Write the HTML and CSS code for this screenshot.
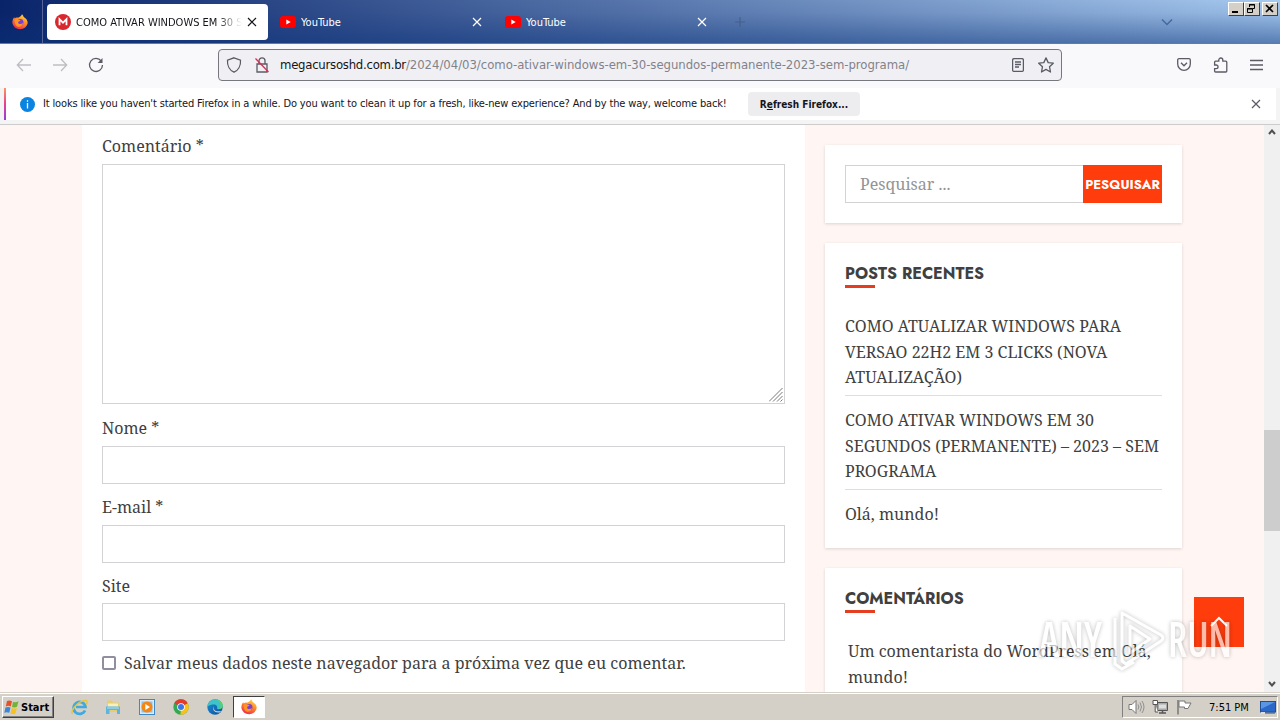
FILE: index.html
```
<!DOCTYPE html>
<html lang="pt-BR">
<head>
  <meta charset="UTF-8">
  <meta name="viewport" content="width=device-width, initial-scale=1.0">
  <title>COMO ATIVAR WINDOWS EM 30 SEGUNDOS</title>
  <link rel="stylesheet" href="styles.css">
</head>
<body>
  <!-- shared shapes -->
  <svg width="0" height="0" class="defs">
    <defs>
      <linearGradient id="fire" x1="0.8" y1="0" x2="0.3" y2="1">
        <stop offset="0" stop-color="#ffe045"/>
        <stop offset="0.45" stop-color="#ff8a2a"/>
        <stop offset="1" stop-color="#f0284f"/>
      </linearGradient>
      <linearGradient id="edge" x1="0" y1="0" x2="1" y2="1">
        <stop offset="0" stop-color="#1c8fd8"/>
        <stop offset="1" stop-color="#0c4f9c"/>
      </linearGradient>
      <symbol id="firefox" viewBox="0 0 16 16">
        <path d="M10 .3c1 1.200 1.500 2 1.700 2.700 2.500 1.300 4 3.600 4 6A7.700 7 0 0 1 .4 9C.3 6.500 1 4.600 2.200 3.200l.5 1.400C3.800 3.500 5 3.400 6 3.800 7.200 2.900 9.500 2.500 10 .3z" fill="url(#fire)"/>
        <circle cx="8.200" cy="8.200" r="3.200" fill="#7a3fd0"/>
        <path d="M2.700 6c1.500-1.300 3-1 4.200-.2l1.900.3C7.900 7.500 6.300 7.400 6 8.400c.6 1.900 3 2.200 5 .7-.3 2.600-2.500 3.900-4.600 3.700C4 12.500 2.300 9.500 2.700 6z" fill="#ff9422"/>
      </symbol>
      <symbol id="youtube" viewBox="0 0 16 12">
        <rect width="16" height="12" rx="3" fill="#f00"/>
        <path d="M6.300 3.500v5L10.700 6z" fill="#fff"/>
      </symbol>
      <symbol id="cross" viewBox="0 0 10 10">
        <path d="M1 1l8 8M9 1l-8 8" fill="none" stroke="currentColor" stroke-width="1.200"/>
      </symbol>
      <symbol id="chevron" viewBox="0 0 12 8">
        <path d="M1 1.500l5 5 5-5" fill="none" stroke="currentColor" stroke-width="1.500"/>
      </symbol>
    </defs>
  </svg>

  <div class="tabbar">
    <div class="pinned"><svg width="16" height="16"><use href="#firefox"/></svg></div>
    <div class="tab active">
      <svg width="16" height="16" viewBox="0 0 16 16"><circle cx="8" cy="8" r="8" fill="#d9272e"/><path d="M4.500 11.300V5.200L8 8.700l3.500-3.500v6.100" fill="none" stroke="#fff" stroke-width="1.800"/></svg>
      <span class="tab-title fade">COMO ATIVAR WINDOWS EM 30 SE</span>
      <svg class="close" width="10" height="10"><use href="#cross"/></svg>
    </div>
    <div class="tab">
      <svg width="16" height="12"><use href="#youtube"/></svg>
      <span class="tab-title">YouTube</span>
      <svg class="close" width="10" height="10"><use href="#cross"/></svg>
    </div>
    <div class="tab">
      <svg width="16" height="12"><use href="#youtube"/></svg>
      <span class="tab-title">YouTube</span>
      <svg class="close" width="10" height="10"><use href="#cross"/></svg>
    </div>
    <svg class="plus" width="10" height="10" viewBox="0 0 10 10"><path d="M5 0v10M0 5h10" stroke="#46608c" stroke-width="1.200"/></svg>
    <svg class="alltabs" width="12" height="8"><use href="#chevron"/></svg>
    <div class="winbuttons">
      <div class="winbtn"><svg width="13" height="11" viewBox="0 0 13 11"><path d="M3 9h6" stroke="#000" stroke-width="2"/></svg></div>
      <div class="winbtn"><svg width="13" height="11" viewBox="0 0 13 11"><path d="M4.500 4V1.500h5v4H8M2.500 5.500h5v4h-5zM4 2h6M2 6h6" fill="none" stroke="#000"/></svg></div>
      <div class="winbtn last"><svg width="13" height="11" viewBox="0 0 13 11"><path d="M3 2l7 7M10 2L3 9" stroke="#000" stroke-width="1.700"/></svg></div>
    </div>
  </div>

  <div class="navbar">
    <svg class="back" width="16" height="16" viewBox="0 0 16 16"><path d="M15 8H1.500M7 2L1.300 8 7 14" /></svg>
    <svg class="forward" width="16" height="16" viewBox="0 0 16 16"><path d="M1 8h13.500M9 2l5.700 6L9 14" /></svg>
    <svg class="reload" width="16" height="16" viewBox="0 0 16 16"><path d="M13.300 4.200A6.500 6.500 0 1 0 14.500 8"/><path d="M14.500 1v5H9.700z" fill="#5b5b66" stroke="none"/></svg>
    <div class="urlbar">
      <svg width="16" height="16" viewBox="0 0 16 16"><path d="M8 .8l6.500 2.300C15 9 12 13.500 8 15.200 4 13.500 1 9 1.500 3.100z"/></svg>
      <svg class="lock" width="16" height="16" viewBox="0 0 16 16"><path d="M3 7h10v8H3zM5 7V3.800a3 3 0 0 1 6 0V7"/><path d="M1.500 1.500l13 13.500" stroke="#e22850"/></svg>
      <span class="url"><b>megacursoshd.com.br</b>/2024/04/03/como-ativar-windows-em-30-segundos-permanente-2023-sem-programa/</span>
      <svg class="reader" width="12" height="14" viewBox="0 0 12 14"><rect x=".6" y=".6" width="10.800" height="12.800" rx="1.500"/><path d="M3 4h6M3 6.500h6M3 9h4"/></svg>
      <svg width="16" height="16" viewBox="0 0 16 16"><path d="M8 .9l2.200 4.700 5.100.6-3.800 3.500 1 5.300L8 12.400 3.500 15l1-5.300L.7 6.200l5.100-.6z" stroke-linejoin="round"/></svg>
    </div>
    <svg class="pocket" width="14" height="13" viewBox="0 0 14 13"><path d="M2 .7h10a1.300 1.300 0 0 1 1.300 1.300v4a6.300 6.300 0 0 1-12.600 0V2A1.300 1.300 0 0 1 2 .7zM4 4.800l3 3 3-3"/></svg>
    <svg class="ext" width="15" height="16" viewBox="0 0 15 16"><path d="M1.600 8V5.200q0-1 1-1h3.200V3a2 2 0 0 1 4 0v1.200h3q1 0 1 1V14q0 1-1 1H2.600q-1 0-1-1v-2.300h1.600a1.800 1.800 0 0 0 0-3.700z"/></svg>
    <svg class="menu" width="13" height="12" viewBox="0 0 13 12"><path d="M0 1.500h13M0 6h13M0 10.500h13"/></svg>
  </div>

  <div class="notice">
    <div class="notice-box">
      <svg width="15" height="15" viewBox="0 0 15 15"><circle cx="7.500" cy="7.500" r="7.500" fill="#0a84e0"/><path d="M7.500 3.300v1.500M7.500 6v5.500" stroke="#fff" stroke-width="1.300"/></svg>
      <span class="notice-text">It looks like you haven't started Firefox in a while. Do you want to clean it up for a fresh, like-new experience? And by the way, welcome back!</span>
      <button class="refresh">R<u>e</u>fresh Firefox...</button>
      <svg class="close" width="10" height="10"><use href="#cross"/></svg>
    </div>
  </div>

  <div class="viewport">
    <div class="page">
      <form class="comments">
        <label>Comentário *</label>
        <div class="field area">
          <svg width="14" height="14" viewBox="0 0 14 14"><path d="M0 13.500L13.500 0M4 13.500L13.500 4M8 13.500L13.500 8M11.500 13.500l2-2"/></svg>
        </div>
        <label>Nome *</label>
        <div class="field"></div>
        <label>E-mail *</label>
        <div class="field"></div>
        <label class="site">Site</label>
        <div class="field"></div>
        <div class="consent"><span class="check"></span>Salvar meus dados neste navegador para a próxima vez que eu comentar.</div>
      </form>

      <div class="sidebar">
        <div class="widget search">
          <div class="search-input">Pesquisar ...</div>
          <button class="search-btn">PESQUISAR</button>
        </div>
        <div class="widget">
          <h2>POSTS RECENTES</h2>
          <ul>
            <li>COMO ATUALIZAR WINDOWS PARA<br>VERSAO 22H2 EM 3 CLICKS (NOVA<br>ATUALIZAÇÃO)</li>
            <li>COMO ATIVAR WINDOWS EM 30<br>SEGUNDOS (PERMANENTE) – 2023 – SEM<br>PROGRAMA</li>
            <li>Olá, mundo!</li>
          </ul>
        </div>
        <div class="widget">
          <h2>COMENTÁRIOS</h2>
          <p class="recent">Um comentarista do WordPress em Olá,<br>mundo!</p>
        </div>
      </div>

      <div class="totop"><svg width="18" height="12" viewBox="0 0 18 12"><path d="M1 10l8-8 8 8" fill="none" stroke="#fff" stroke-width="2"/></svg></div>
      <svg class="watermark" width="200" height="70" viewBox="0 0 200 70">
        <g class="wm-text">
          <text x="3" y="52" textLength="63" lengthAdjust="spacingAndGlyphs">ANY</text>
          <text x="132" y="52" textLength="64" lengthAdjust="spacingAndGlyphs">RUN</text>
        </g>
        <path class="wm-mark" d="M86 8l39 22q4 3 0 6L90 59l-4-3zM79 13v46l7 5 12-7M94 21v27l20-14z"/>
      </svg>
    </div>
    <div class="scrollbar">
      <svg width="8" height="6" viewBox="0 0 8 6"><path d="M1 5l3-3.500L7 5"/></svg>
      <div class="thumb"></div>
      <svg width="8" height="6" viewBox="0 0 8 6"><path d="M1 1l3 3.500L7 1"/></svg>
    </div>
  </div>

  <div class="taskbar">
    <div class="start">
      <svg width="16" height="16" viewBox="0 0 16 16"><path d="M3 2q2.500-1.300 5 .2L6.800 7.500q-2.500-1.300-5 0z" fill="#e8502a"/><path d="M9 2.700q2.500 1.200 5.500-.4L13 7.800q-2.500 1.200-5 .2z" fill="#6fb33a"/><path d="M1.500 8.600q2.500-1.300 5 0L5.300 13.800q-2.500-1.300-5 0z" fill="#3b86d8"/><path d="M7.800 9q2.500 1.200 5 0l-1.300 5.400q-2.500 1.200-5 0z" fill="#f7c21e"/></svg>
      <span>Start</span>
    </div>
    <div class="task"><svg width="17" height="17" viewBox="0 0 17 17"><path d="M14 11.500A6 6 0 1 1 14.500 8H5" fill="none" stroke="#3fa9e0" stroke-width="2.700"/><path d="M1.500 15C-1 12.500 6 2.500 14 1.500c3-.2 2.500 2.500 1 4" fill="none" stroke="#e9c53c" stroke-width="1.400"/></svg></div>
    <div class="task"><svg width="17" height="16" viewBox="0 0 17 16"><path d="M2 1.500h5l1 2h6V13H2z" fill="#e8cd6c"/><path d="M3 4.500h10V8H3z" fill="#f8efbd"/><path d="M1 7.500h14V15h-3v-4H4.500v4H1z" fill="#5db5dc"/><path d="M2 9h12" stroke="#b7e3f5"/></svg></div>
    <div class="task"><svg width="16" height="16" viewBox="0 0 16 16"><rect x=".5" y=".5" width="15" height="15" fill="#d8ecfa" stroke="#4488c0"/><rect x="2.500" y="2.500" width="11" height="11" fill="#8cc0e8"/><circle cx="8" cy="8" r="5.500" fill="#f58613"/><path d="M6.300 5v6l4.700-3z" fill="#fff"/></svg></div>
    <div class="task"><svg width="16" height="16" viewBox="0 0 16 16"><circle cx="8" cy="8" r="7.700" fill="#34a853"/><path d="M8 8L1.200 4.300A7.700 7.700 0 0 1 14.700 4.200z" fill="#e33b2e"/><path d="M8 8l6.700-3.800A7.700 7.700 0 0 1 7.500 15.700z" fill="#fbc116"/><circle cx="8" cy="8" r="3.800" fill="#fff"/><circle cx="8" cy="8" r="3" fill="#3b78e7"/></svg></div>
    <div class="task"><svg width="16" height="16" viewBox="0 0 16 16"><circle cx="8" cy="8" r="7.700" fill="url(#edge)"/><path d="M.4 7.500C1 2.500 5 .3 8.500.3c4.300 0 7.300 3 7.200 6.500-.2 3-3.500 4-5.800 3C11.500 6 7 3.500.4 7.500z" fill="#3cc4c8"/><path d="M7 7.200c-1.500 3 1.500 6.200 7 4.800l-.8 1.200C8 14.500 4.500 10.500 7 7.200z" fill="#d6d2ca"/><path d="M11 1c3 1 5 3.500 4.700 6-.3 2-1.700 2.800-3.200 3 2-3 1-6-1.500-9z" fill="#5fd35a"/></svg></div>
    <div class="task pressed"><svg width="16" height="16"><use href="#firefox"/></svg></div>
    <div class="tray">
      <svg width="17" height="16" viewBox="0 0 17 16"><path d="M1 5.500h3L8 1.500v13L4 10.500H1z" fill="#fff" stroke="#777"/><path d="M10 5.500q1.700 2.500 0 5M12 3.500q3 4.500 0 9M14 2q4 6 0 12" fill="none" stroke="#888" stroke-width=".9"/></svg>
      <svg class="net" width="17" height="16" viewBox="0 0 17 16"><path d="M5 3.500h10.500v8H5z" fill="#a9a9a9" stroke="#555"/><path d="M7 5.500h7v4H7z" fill="#ddd"/><path d="M7 14h7M10.500 12v2" stroke="#555" stroke-width="1.500"/><path d="M1 1.500h4.500v4H1zM3.200 5.500V13H6" fill="#fff" stroke="#555"/></svg>
      <svg class="flag" width="17" height="16" viewBox="0 0 17 16"><path d="M2 1v14.500" stroke="#777" stroke-width="1.500"/><path d="M3 2h6v2h6l-3 5.500H8.500V8H3z" fill="#fff" stroke="#777"/></svg>
      <span class="clock">7:51 PM</span>
      <svg class="desk" width="16" height="13" viewBox="0 0 16 13"><rect x=".5" y=".5" width="15" height="10.500" fill="#2c68c8" stroke="#234f92"/><path d="M1 1h14L1 8z" fill="#5a95e6"/><path d="M1 12h4" stroke="#ddd" stroke-width="2"/><path d="M5 12h10" stroke="#234f92"/></svg>
    </div>
  </div>
</body>
</html>
```
FILE: styles.css
```
* {
  box-sizing: border-box;
}

body {
  margin: 0;
  width: 1280px;
  height: 720px;
  overflow: hidden;
  display: flex;
  flex-direction: column;
  font-family: "DejaVu Sans Condensed", "DejaVu Sans", sans-serif;
  font-stretch: condensed;
  font-size: 11px;
  color: #15141a;
}

svg {
  display: block;
  flex: none;
}

.defs {
  position: absolute;
}

/* tab strip */
.tabbar {
  height: 44px;
  flex: none;
  display: flex;
  align-items: center;
  background: linear-gradient(rgba(10, 36, 106, 0), rgba(10, 36, 106, 0.08) 30%, rgba(10, 50, 120, 0.5)), linear-gradient(90deg, #0a246a, #a6caf0);
  border-bottom: 1px solid #6b7897;
}

.pinned {
  width: 43px;
  height: 43px;
  padding: 14px 0 0 12px;
  border-right: 1px solid #53659a;
}

.tab {
  width: 221px;
  height: 36px;
  margin-left: 4px;
  padding: 0 11px 0 8px;
  display: flex;
  align-items: center;
  gap: 5px;
  border-radius: 4px;
  color: #fff;
}

.tab.active {
  background: #fff;
  color: #15141a;
}

.tab-title {
  flex: 1;
  overflow: hidden;
  white-space: nowrap;
  line-height: 16px;
  padding-top: 2px;
}

.fade {
  -webkit-mask-image: linear-gradient(90deg, #000 85%, transparent);
  mask-image: linear-gradient(90deg, #000 85%, transparent);
}

.plus {
  margin-left: 17px;
}

.alltabs {
  margin-left: 416px;
  color: #46689e;
}

.winbuttons {
  display: flex;
  align-self: flex-start;
  margin: 2px 0 0 55px;
}

.winbtn {
  width: 16px;
  height: 14px;
  background: #d4d0c8;
  border: 1px solid;
  border-color: #fff #404040 #404040 #fff;
}

.winbtn.last {
  margin-left: 2px;
}

/* navigation */
.navbar {
  height: 44px;
  flex: none;
  display: flex;
  align-items: center;
  padding-bottom: 3px;
  background: #f9f9fb;
}

.navbar svg {
  fill: none;
  stroke: #5b5b66;
  stroke-width: 1.3;
}

.back {
  margin-left: 16px;
}

.navbar .back,
.navbar .forward {
  stroke: #bdbdc3;
}

.forward,
.reload {
  margin-left: 20px;
}

.urlbar {
  width: 844px;
  height: 32px;
  margin-left: 114px;
  padding: 0 7px;
  display: flex;
  align-items: center;
  background: #f0f0f4;
  border: 1px solid #77777f;
  border-radius: 4px;
}

.lock {
  margin-left: 12px;
}

.url {
  flex: 1;
  margin-left: 10px;
  font-size: 13px;
  letter-spacing: -0.035px;
  white-space: nowrap;
  color: #82828a;
}

.url b {
  font-weight: normal;
  letter-spacing: -0.25px;
  color: #15141a;
}

.reader {
  margin-right: 14px;
}

.pocket {
  margin-left: 115px;
}

.ext {
  margin-left: 22px;
}

.menu {
  margin-left: 22px;
}

/* notification bar */
.notice {
  height: 37px;
  flex: none;
  background: #f4f4f5;
  border-bottom: 1px solid #cccccc;
  padding: 0 4px;
}

.notice-box {
  height: 32px;
  display: flex;
  align-items: center;
  padding-left: 14px;
  background: #fff;
  border-left: 2px solid;
  border-image: linear-gradient(#ff9a60, #e64090, #8a40e0) 1;
}

.notice-text {
  width: 684px;
  margin: -2px 0 0 8px;
  white-space: nowrap;
  letter-spacing: -0.148px;
}

.refresh {
  width: 112px;
  height: 24px;
  margin-left: 21px;
  padding: 0;
  border: none;
  border-radius: 4px;
  background: #ededf0;
  font: bold 10px "DejaVu Sans Condensed", "DejaVu Sans", sans-serif;
  color: #15141a;
}

.notice .close {
  margin-left: 391px;
  color: #5b5b66;
}

/* page */
.viewport {
  height: 567px;
  flex: none;
  display: flex;
}

.page {
  position: relative;
  width: 1264px;
  height: 567px;
  padding-left: 82px;
  display: flex;
  align-items: flex-start;
  overflow: hidden;
  background: #fff5f2;
  font-family: "Noto Serif", "DejaVu Serif Condensed", "DejaVu Serif", serif;
  font-size: 16px;
  line-height: 25.6px;
  color: #404040;
}

.comments {
  width: 723px;
  height: 567px;
  padding: 8px 20px 0;
  background: #fff;
}

.comments label {
  display: block;
  height: 26px;
  margin-bottom: 5px;
  line-height: 26px;
}

.comments .site {
  margin-bottom: 4px;
}

.field {
  height: 38px;
  margin-bottom: 10px;
  border: 1px solid #d3d3d6;
}

.area {
  height: 240px;
  margin-bottom: 11px;
  display: flex;
  align-items: flex-end;
  justify-content: flex-end;
  padding: 1px;
}

.area svg {
  stroke: #777;
  stroke-width: 1;
}

.consent {
  display: flex;
  align-items: center;
  margin-top: -1px;
  line-height: 27px;
  letter-spacing: 0.03px;
  white-space: nowrap;
}

.check {
  width: 14px;
  height: 14px;
  margin: 0 8px 1px 0;
  border: 2px solid #8f8f9d;
  border-radius: 2px;
}

.sidebar {
  width: 357px;
  margin-left: 20px;
  padding-top: 20px;
}

.widget {
  margin-bottom: 20px;
  padding: 20px;
  background: #fff;
  box-shadow: 0 1px 3px rgba(0, 0, 0, 0.14);
  white-space: nowrap;
}

.widget h2 {
  position: relative;
  margin: 0 0 26px;
  height: 25px;
  line-height: 22px;
  font-family: Jost, Lato, sans-serif;
  font-size: 16px;
  font-weight: 700;
}

.widget h2::after {
  content: "";
  position: absolute;
  left: 0;
  bottom: 0;
  width: 30px;
  height: 3px;
  background: #e53d20;
}

.search {
  display: flex;
}

.search-input {
  width: 238px;
  height: 38px;
  padding-left: 14px;
  line-height: 37px;
  border: 1px solid #d3d3d6;
  border-right: none;
  color: #949494;
}

.search-btn {
  width: 79px;
  height: 38px;
  padding: 0;
  border: none;
  background: #ff3c0c;
  font-family: Jost, Lato, sans-serif;
  font-size: 13px;
  font-weight: 700;
  color: #fff;
}

.widget ul {
  margin: 0;
  padding: 0;
  list-style: none;
}

.widget li {
  padding: 12.4px 0 4px;
  border-bottom: 1px solid #dedede;
}

.widget li:first-child {
  padding-top: 0;
}

.widget li:last-child {
  padding-bottom: 0;
  border-bottom: none;
}

.recent {
  margin: 0 0 0 3px;
}

.totop {
  position: absolute;
  left: 1194px;
  top: 472px;
  width: 50px;
  height: 50px;
  display: flex;
  align-items: center;
  justify-content: center;
  background: #ff3c0c;
}

.watermark {
  position: absolute;
  left: 1036px;
  top: 480px;
  filter: drop-shadow(0 0 2px rgba(0, 0, 0, 0.4));
  opacity: 0.65;
}

.wm-text {
  font-family: "Open Sans", sans-serif;
  font-size: 49px;
  font-weight: 600;
  fill: #fff;
}

.wm-mark {
  fill: none;
  stroke: #fff;
  stroke-width: 3;
  stroke-linejoin: round;
}

.scrollbar {
  width: 16px;
  padding: 4px 0 5px;
  display: flex;
  flex-direction: column;
  align-items: center;
  background: #f0f0f0;
}

.scrollbar svg {
  fill: none;
  stroke: #505050;
  stroke-width: 2;
}

.thumb {
  width: 16px;
  height: 102px;
  margin: 295px 0 150px;
  background: #cdcdcd;
}

/* taskbar */
.taskbar {
  height: 28px;
  flex: none;
  display: flex;
  align-items: center;
  padding: 1px 2px 0;
  background: #d4d0c8;
  border-top: 1px solid #d4d0c8;
  box-shadow: inset 0 1px #fff;
}

.start {
  width: 52px;
  height: 22px;
  display: flex;
  align-items: center;
  gap: 1px;
  padding-left: 1px;
  border: 1px solid;
  border-color: #fff #404040 #404040 #fff;
  box-shadow: inset -1px -1px #808080;
  font-weight: bold;
  color: #000;
}

.start + .task {
  margin-left: 9px;
}

.task {
  width: 32px;
  height: 22px;
  margin-right: 2px;
  display: flex;
  align-items: center;
  justify-content: center;
}

.pressed {
  background: #fff;
  border: 1px solid;
  border-color: #404040 #fff #fff #404040;
}

.tray {
  width: 156px;
  height: 22px;
  margin-left: auto;
  padding-left: 5px;
  display: flex;
  align-items: center;
  border: 1px solid;
  border-color: #808080 #fff #fff #808080;
  color: #000;
}

.net,
.flag {
  margin-left: 7px;
}

.clock {
  width: 42px;
  margin-left: 16px;
  white-space: nowrap;
}

.desk {
  margin-left: 9px;
}
```
